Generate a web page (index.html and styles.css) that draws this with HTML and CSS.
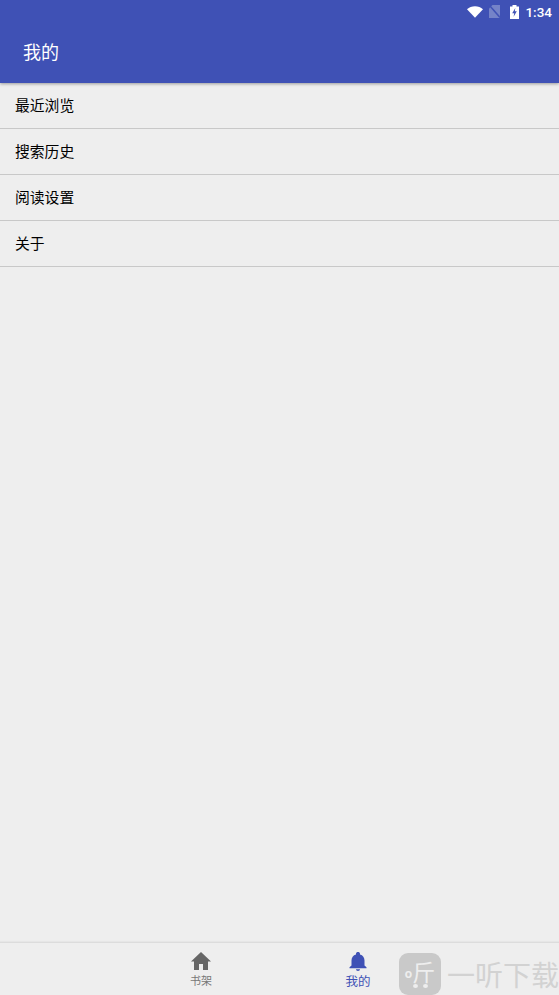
FILE: index.html
```html
<!DOCTYPE html>
<html>
<head>
    <meta name="viewport" content="width=device-width, initial-scale=1.0">
    <title>我的</title>
    <link rel="stylesheet" href="styles.css">
</head>
<body>
    <div class="page">
        <div class="header">
            <div class="status">
                <svg class="ic-wifi" width="16" height="12" viewBox="0 0 17 12"><path d="M0 3C2.300 1.100 5.200 0 8.500 0S14.700 1.100 17 3L8.500 12z" fill="#fff"/></svg>
                <svg class="ic-sim" width="11" height="13" viewBox="0 0 11 13"><path d="M3.500 0H11v13H0V3.500z" fill="#7583c8"/><path d="M0.500 0.500L11 12.500" stroke="#3f51b5" stroke-width="1.500"/></svg>
                <svg class="ic-batt" width="9" height="14" viewBox="0 0 9 14"><path d="M2.500 0h4v1.500H9V14H0V1.500h2.500z" fill="#fff"/><path d="M5.300 3L2.200 8.200h2l-.6 3.500 3.200-5.400H4.800z" fill="#3f51b5"/></svg>
                <span class="clock">1:34</span>
            </div>
            <div class="title">我的</div>
        </div>

        <div class="list">
            <div class="item">最近浏览</div>
            <div class="item">搜索历史</div>
            <div class="item">阅读设置</div>
            <div class="item">关于</div>
        </div>

        <div class="nav">
            <div class="tab">
                <svg width="20" height="18" viewBox="0 0 20 18"><path d="M8 18v-6h4v6h5V9.500h3L10 0 0 9.500h3V18z" fill="#666"/></svg>
                <span>书架</span>
            </div>
            <div class="tab active">
                <svg width="18" height="19" viewBox="0 0 18 19"><path d="M9 19c1.100 0 2-.7 2-1.700H7c0 1 .9 1.700 2 1.700zm6.500-5.500V8.500c0-3-1.600-5.400-4.500-6.100V1.700C11 .700 10.100 0 9 0S7 .700 7 1.700v.7C4.100 3.100 2.500 5.500 2.500 8.500v5L.5 15.200v1h17v-1z" fill="#3f51b5"/></svg>
                <span>我的</span>
            </div>
        </div>

        <div class="watermark">
            <div class="wm-logo">
                <span class="wm-o">o</span><span class="wm-ting">斤</span>
            </div>
            <span class="wm-text">一听下载</span>
        </div>
    </div>
</body>
</html>
```

FILE: styles.css
```css
body {
    margin: 0;
    background: #eeeeee;
    font-family: Roboto, "Noto Sans CJK SC", sans-serif;
}
.page {
    position: relative;
    display: flex;
    flex-direction: column;
    height: 995px;
    overflow: hidden;
}
.header {
    height: 83px;
    background: #3f51b5;
    color: white;
    box-shadow: 0 1px 3px rgba(0,0,0,0.35);
}
.status {
    display: flex;
    align-items: center;
    justify-content: flex-end;
    height: 23px;
    padding-right: 7px;
}
.ic-wifi {
    margin-right: 6px;
}
.ic-sim {
    margin-right: 10px;
}
.ic-batt {
    margin-right: 6px;
}
.clock {
    font-size: 13.5px;
    font-weight: 500;
}
.title {
    padding: 10px 0 0 23px;
    font-size: 18px;
    line-height: 40px;
}
.list {
    flex: 1;
}
.item {
    height: 45px;
    padding-left: 15px;
    border-bottom: 1px solid #c8c8c8;
    color: #000;
    font-size: 14.8px;
    line-height: 46px;
}
.nav {
    display: flex;
    justify-content: center;
    gap: 56px;
    height: 52px;
    border-top: 1px solid #dcdcdc;
    box-shadow: 0 -1px 1px rgba(0,0,0,0.03);
}
.tab {
    display: flex;
    flex-direction: column;
    align-items: center;
    width: 101px;
    padding-top: 9px;
    color: #777;
    font-size: 11px;
}
.tab span {
    margin-top: 3px;
    line-height: 17px;
}
.tab.active {
    color: #3f51b5;
    font-size: 12.5px;
}
.tab.active span {
    margin-top: 2px;
}
.watermark {
    position: absolute;
    left: 399px;
    top: 953px;
    display: flex;
    align-items: center;
    gap: 6px;
}
.wm-logo {
    display: flex;
    align-items: center;
    justify-content: center;
    width: 42px;
    height: 42px;
    border-radius: 9px;
    background: #c9c9c9;
    color: #eee;
    line-height: 42px;
}
.wm-o {
    font-size: 13px;
    font-weight: bold;
}
.wm-ting {
    position: relative;
    font-size: 23px;
}
/* note heads at the foot of the logo glyph */
.wm-ting::before,
.wm-ting::after {
    content: "";
    position: absolute;
    top: 31px;
    width: 5px;
    height: 4px;
    border-radius: 50%;
    background: #eee;
}
.wm-ting::before {
    left: 1px;
}
.wm-ting::after {
    left: 11px;
}
.wm-text {
    color: #d2d2d2;
    font-size: 28px;
}
```
